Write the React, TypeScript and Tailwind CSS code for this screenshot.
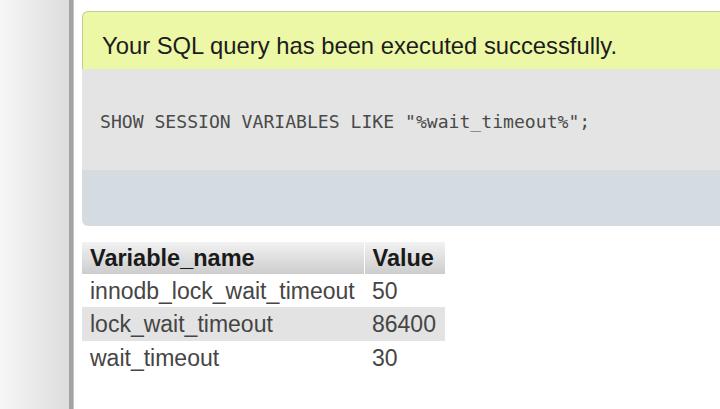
const rows = [
  { name: "innodb_lock_wait_timeout", value: "50" },
  { name: "lock_wait_timeout", value: "86400" },
  { name: "wait_timeout", value: "30" },
];

export default function App() {
  return (
    <div className="flex h-[409px] w-[720px] overflow-hidden bg-white font-['Liberation_Sans',Arial,sans-serif]">
      {/* navigation frame edge */}
      <div className="w-[69px] shrink-0 bg-gradient-to-r from-[#f6f6f6] to-[#dddddd]" />
      <div className="w-[5px] shrink-0 border-r border-[#c4c4c4] bg-[#a3a3a3]" />

      <div className="min-w-0 flex-1 pl-[8px] pt-[11px]">
        <div className="w-[660px]">
          <div className="h-[58px] rounded-t-[6px] border border-b-0 border-[#bfd08c] bg-[#ecf8a6] pl-[19px] pt-[20px] text-[23.8px] leading-[27px] text-[#1c1c1c]">
            Your SQL query has been executed successfully.
          </div>
          <div className="h-[101px] bg-[#e4e4e4] pl-[18px] pt-[42px] font-['DejaVu_Sans_Mono',monospace] text-[18.1px] leading-[21px] text-[#4a4a4a]">
            SHOW SESSION VARIABLES LIKE "%wait_timeout%";
          </div>
          <div className="h-[56px] rounded-b-[6px] bg-[#d4dce2]" />
        </div>

        <table className="mt-[16px] border-collapse text-[23px] leading-[26px]">
          <thead>
            <tr className="h-[32px]">
              <th className="w-[282px] border-r border-white bg-gradient-to-b from-[#f2f2f2] to-[#cdcdcd] py-0 pl-[8px] text-left text-[23.5px] font-bold text-[#1a1a1a]">
                Variable_name
              </th>
              <th className="w-[81px] bg-gradient-to-b from-[#f2f2f2] to-[#cdcdcd] py-0 pl-[8px] text-left text-[23.5px] font-bold text-[#1a1a1a]">
                Value
              </th>
            </tr>
          </thead>
          <tbody>
            {rows.map((r, i) => (
              <tr
                key={r.name}
                className={i % 2 === 1 ? "h-[34px] bg-[#e3e3e3]" : "h-[33px] bg-white"}
              >
                <td className="py-0 pl-[8px] text-[#454545]">{r.name}</td>
                <td className="py-0 pl-[8px] text-[#454545]">{r.value}</td>
              </tr>
            ))}
          </tbody>
        </table>
      </div>
    </div>
  );
}
